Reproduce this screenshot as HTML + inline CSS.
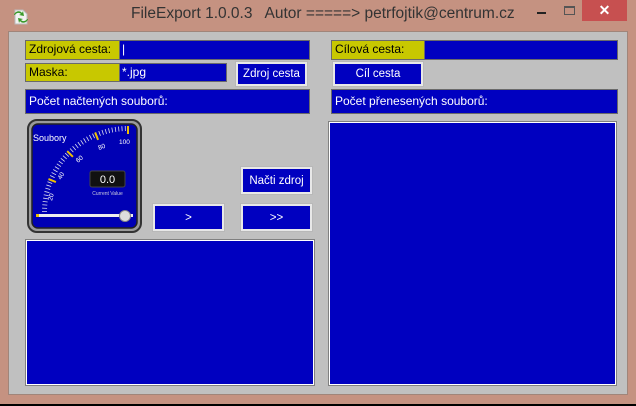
<!DOCTYPE html>
<html><head><meta charset="utf-8"><style>
*{margin:0;padding:0;box-sizing:border-box}
body{width:636px;height:406px;background:#000;position:relative;overflow:hidden;font-family:"Liberation Sans",sans-serif}
.frame{position:absolute;left:0;top:0;width:636px;height:404px;background:#c59281}
.client{position:absolute;left:8px;top:31px;width:620px;height:364px;background:#c0c0c0;border:1px solid #a0857a}
.a{position:absolute}
.lab{background:#c8c800;color:#000;font-size:12px;line-height:17px;padding-left:3px;border:1px solid #6a6a6a}
.fld{background:#0000c0;color:#fff;font-size:12px;line-height:17px;padding-left:2px;border:1px solid #6a6a6a}
.btn{background:#e8e8e8;border:1px solid #b8b8b8;padding:2px}
.btn div{background:#0000c0;color:#fff;font-size:11.5px;width:100%;height:100%;display:flex;align-items:center;justify-content:center}
.panel{background:#0000c0;border:1px solid #808080;box-shadow:inset 0 0 0 1px #fff}
.title{position:absolute;left:131px;top:5px;font-family:"Liberation Sans",sans-serif;font-size:15.5px;color:#333;white-space:nowrap}
</style></head><body>
<div class="frame"></div>
<svg class="a" style="left:12px;top:8px" width="18" height="18" viewBox="0 0 18 18">
<path d="M3 2h8l4 4v10H3z" fill="#f2f2f2" stroke="#bbb"/>
<path d="M2 7c1-4 6-5 8-2l1-2 1 5-5-1 2-1c-2-2-5-1-6 1z" fill="#3a9a2a"/>
<path d="M16 11c-1 4-6 5-8 2l-1 2-1-5 5 1-2 1c2 2 5 1 6-1z" fill="#3a9a2a"/>
</svg>
<div class="title">FileExport 1.0.0.3 &nbsp; Autor =====&gt; petrfojtik@centrum.cz</div>
<div class="a" style="left:537px;top:12px;width:9px;height:2px;background:#222"></div>
<div class="a" style="left:564px;top:6px;width:11px;height:9px;border:1px solid #555;border-top-width:2px"></div>
<div class="a" style="left:582px;top:0;width:45px;height:21px;background:#c75050;color:#fff;font-size:14px;font-weight:bold;text-align:center;line-height:20px">✕</div>
<div class="client"></div>

<div class="a lab" style="left:25px;top:40px;width:95px;height:20px">Zdrojová cesta:</div>
<div class="a fld" style="left:119px;top:40px;width:191px;height:20px">|</div>
<div class="a lab" style="left:25px;top:63px;width:95px;height:19px">Maska:</div>
<div class="a fld" style="left:119px;top:63px;width:108px;height:19px">*.jpg</div>
<div class="a btn" style="left:235px;top:61px;width:73px;height:26px"><div>Zdroj cesta</div></div>
<div class="a fld" style="left:25px;top:89px;width:285px;height:25px;line-height:22px;padding-left:3px">Počet načtených souborů:</div>

<div class="a lab" style="left:331px;top:40px;width:94px;height:20px">Cílová cesta:</div>
<div class="a fld" style="left:424px;top:40px;width:194px;height:20px"></div>
<div class="a btn" style="left:332px;top:61px;width:92px;height:26px"><div>Cíl cesta</div></div>
<div class="a fld" style="left:331px;top:89px;width:287px;height:25px;line-height:22px;padding-left:3px">Počet přenesených souborů:</div>

<div class="a panel" style="left:328px;top:121px;width:289px;height:265px"></div>
<div class="a panel" style="left:25px;top:239px;width:290px;height:147px"></div>

<div class="a btn" style="left:240px;top:166px;width:73px;height:29px"><div>Načti zdroj</div></div>
<div class="a btn" style="left:152px;top:203px;width:73px;height:29px"><div>&gt;</div></div>
<div class="a btn" style="left:240px;top:203px;width:73px;height:29px"><div>&gt;&gt;</div></div>

<svg class="a" style="left:27px;top:119px" width="115" height="114" viewBox="0 0 115 114">
<defs><clipPath id="q"><rect x="0" y="0" width="101.5" height="94"/></clipPath></defs>
<rect x="1" y="1" width="113" height="112" rx="9" fill="#9a9a9a" stroke="#333" stroke-width="2"/>
<rect x="5" y="5" width="105" height="104" rx="6" fill="#0000b4" stroke="#222" stroke-width="1.5"/>
<circle cx="101" cy="93" r="83.5" fill="none" stroke="#dde" stroke-width="5" stroke-dasharray="0.8 2.479" clip-path="url(#q)"/>
<g stroke="#f0c000" stroke-width="2">
<line x1="21.5" y1="60.1" x2="28.9" y2="63.1"/>
<line x1="40.2" y1="32.2" x2="45.9" y2="37.8"/>
<line x1="68.1" y1="13.5" x2="71.1" y2="20.9"/>
<line x1="101" y1="7" x2="101" y2="15"/>
</g>
<text x="6" y="22" fill="#fff" font-size="9" font-family="Liberation Sans">Soubory</text>
<text x="92" y="25" fill="#fff" font-size="6.5" font-family="Liberation Sans">100</text>
<text x="72" y="31" fill="#fff" font-size="6.5" font-family="Liberation Sans" transform="rotate(-20 72 31)">80</text>
<text x="51" y="44" fill="#fff" font-size="6.5" font-family="Liberation Sans" transform="rotate(-40 51 44)">60</text>
<text x="34" y="61" fill="#fff" font-size="6.5" font-family="Liberation Sans" transform="rotate(-60 34 61)">40</text>
<text x="25" y="82" fill="#fff" font-size="6.5" font-family="Liberation Sans" transform="rotate(-75 25 82)">20</text>
<rect x="63" y="52" width="35" height="16" rx="2" fill="#111" stroke="#444"/>
<text x="80.5" y="64" fill="#fff" font-size="11" text-anchor="middle" font-family="Liberation Sans">0.0</text>
<text x="80.5" y="76" fill="#ccd" font-size="5" text-anchor="middle" font-family="Liberation Sans">Current Value</text>
<rect x="9" y="95" width="97" height="3" fill="#eee"/>
<rect x="9" y="95" width="3" height="3" fill="#e8c000"/>
<circle cx="98" cy="97" r="5.5" fill="#ddd" stroke="#888"/>
</svg>
</body></html>
